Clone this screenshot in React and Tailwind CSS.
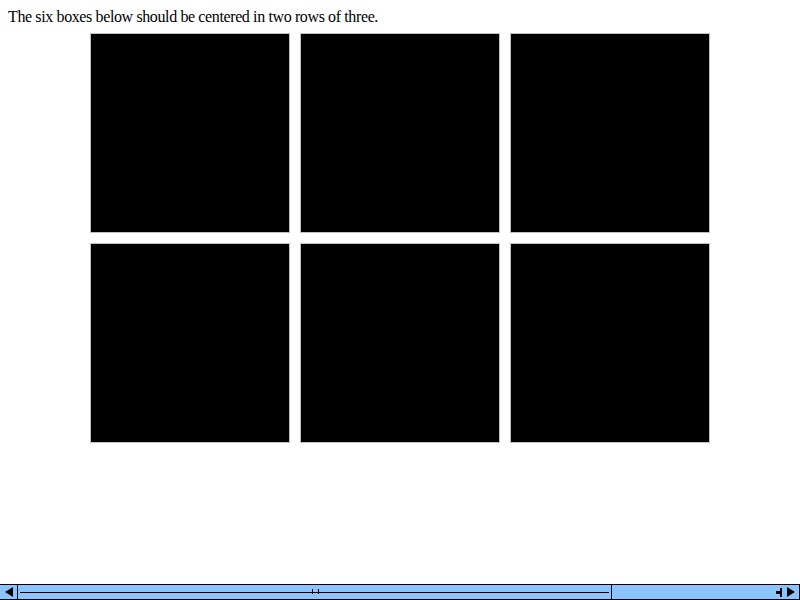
export default function App() {
  return (
    <div className="relative w-[800px] h-[600px] bg-white overflow-hidden font-['Liberation_Serif','Times_New_Roman',serif]">
      <div className="pt-[8px] pl-[8px] text-[16px] leading-[18px] tracking-[-0.38px] text-black font-['Liberation_Serif','Times_New_Roman',serif]">
        The six boxes below should be centered in two rows of three.
      </div>
      <div className="mt-[7px] flex flex-col items-center gap-[10px]">
        {[0, 1].map((r) => (
          <div key={r} className="flex gap-[10px]">
            {[0, 1, 2].map((c) => (
              <div key={c} className="w-[200px] h-[200px] bg-black border border-[#c0c0c0]" />
            ))}
          </div>
        ))}
      </div>
      <div className="absolute left-0 bottom-0 w-[800px] h-[16px] bg-[#8cc4ff] border-t border-black flex">
        <div className="w-[18px] h-full border-r border-black border-b flex items-center justify-center">
          <div className="w-0 h-0 border-y-[5px] border-y-transparent border-r-[8px] border-r-black" />
        </div>
        <div className="relative w-[594px] h-full border-r border-black border-b">
          <div className="absolute left-[2px] right-[2px] top-[7px] h-[1px] bg-black" />
          <div className="absolute left-[294px] top-[4px] w-[1px] h-[5px] bg-black" />
          <div className="absolute left-[300px] top-[4px] w-[1px] h-[5px] bg-black" />
        </div>
        <div className="relative flex-1 h-full border-b border-black">
          <div className="absolute right-[2px] top-[6px] w-[4px] h-[3px] bg-black" />
          <div className="absolute right-0 top-[3px] w-[2px] h-[9px] bg-black" />
        </div>
        <div className="w-[18px] h-full border-r border-b border-black flex items-center justify-center">
          <div className="w-0 h-0 border-y-[5px] border-y-transparent border-l-[8px] border-l-black" />
        </div>
      </div>
    </div>
  );
}
